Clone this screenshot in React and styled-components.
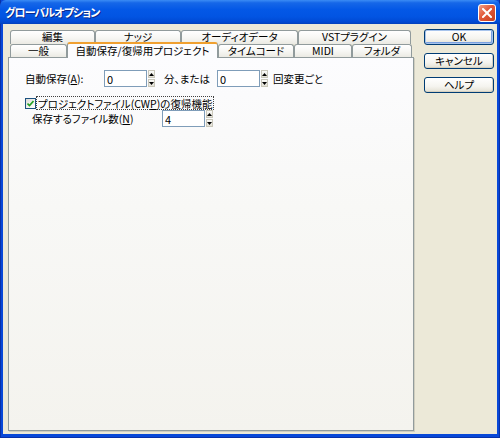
import styled, { createGlobalStyle } from 'styled-components'

const GlobalStyle = createGlobalStyle`
  html, body {
    margin: 0;
    padding: 0;
    background: #ffffff;
  }
  body {
    font-family: "Noto Sans CJK JP", "Noto Sans", sans-serif;
    font-size: 11px;
    font-feature-settings: "palt";
    color: #000000;
  }
`

// 上段タブ
const backTabs = [
  { label: '編集', width: 85 },
  { label: 'ナッジ', width: 86 },
  { label: 'オーディオデータ', width: 117 },
  { label: 'VSTプラグイン', width: 113 },
]

// 下段タブ（2番目が選択中）
const frontTabs = [
  { label: '一般', width: 57 },
  { label: '自動保存/復帰用プロジェクト', width: 151, active: true },
  { label: 'タイムコード', width: 76 },
  { label: 'MIDI', width: 58 },
  { label: 'フォルダ', width: 60 },
]

const Spin = () => (
  <Spinner>
    <SpinButton>
      <svg width="5" height="3" viewBox="0 0 5 3">
        <path d="M2.5 0 L5 3 L0 3 Z" fill="#000" />
      </svg>
    </SpinButton>
    <SpinButton>
      <svg width="5" height="3" viewBox="0 0 5 3">
        <path d="M0 0 L5 0 L2.5 3 Z" fill="#000" />
      </svg>
    </SpinButton>
  </Spinner>
)

const App = () => {
  return (
    <>
      <GlobalStyle />
      <Window>
        <TitleBar>
          <Title>グローバルオプション</Title>
          <CloseButton>
            <svg width="10" height="10" viewBox="0 0 10 10">
              <path d="M1 1 L9 9 M9 1 L1 9" stroke="#fff" strokeWidth="2" strokeLinecap="square" />
            </svg>
          </CloseButton>
        </TitleBar>
        <Body>
          <TabControl>
            <TabRow>
              {backTabs.map((t) => (
                <Tab key={t.label} $width={t.width}>{t.label}</Tab>
              ))}
            </TabRow>
            <TabRow $front>
              {frontTabs.map((t) => (
                <Tab key={t.label} $width={t.width} $active={t.active}>{t.label}</Tab>
              ))}
            </TabRow>
            <Panel>
              <Row>
                <Label $width={79}>自動保存(<u>A</u>):</Label>
                <Field>
                  <Input defaultValue="0" />
                  <Spin />
                </Field>
                <Label $width={53} $indent={9}>分、または</Label>
                <Field>
                  <Input defaultValue="0" />
                  <Spin />
                </Field>
                <Label $indent={5}>回変更ごと</Label>
              </Row>
              <CheckRow>
                <CheckBox>
                  <svg width="7" height="7" viewBox="0 0 7 7">
                    <path d="M0.5 3.5 L2.5 5.5 L6.5 1" stroke="#21a121" strokeWidth="1.6" fill="none" />
                  </svg>
                </CheckBox>
                <FocusLabel>プロジェクトファイル(CW<u>P</u>)の復帰機能</FocusLabel>
              </CheckRow>
              <Row $sub>
                <Label $width={130}>保存するファイル数(<u>N</u>)</Label>
                <Field>
                  <Input defaultValue="4" />
                  <Spin />
                </Field>
              </Row>
            </Panel>
          </TabControl>
          <ButtonColumn>
            <Button $default>OK</Button>
            <Button>キャンセル</Button>
            <Button>ヘルプ</Button>
          </ButtonColumn>
        </Body>
      </Window>
    </>
  )
}

const Window = styled.div`
  width: 500px;
  height: 438px;
  box-sizing: border-box;
  display: flex;
  flex-direction: column;
  background: #0848d8;
  border-left: 1px solid #0831a8;
  border-right: 1px solid #0831a8;
  border-bottom: 1px solid #0831a8;
  padding: 0 2px 3px 2px;
`

const TitleBar = styled.div`
  height: 24px;
  margin: 0 -3px;
  padding: 0 4px 0 5px;
  display: flex;
  align-items: center;
  justify-content: space-between;
  background: linear-gradient(
    #3b8cf5 0%,
    #1667e8 12%,
    #0458e6 40%,
    #0254e2 70%,
    #0049d2 92%,
    #0340b8 100%
  );
  border-radius: 6px 6px 0 0;
`

const Title = styled.div`
  color: #ffffff;
  font-weight: 700;
  font-size: 11px;
  letter-spacing: -0.9px;
  text-shadow: 1px 1px 0 #0a2a8a;
`

const CloseButton = styled.div`
  width: 18px;
  height: 18px;
  box-sizing: border-box;
  border: 1px solid #ffffff;
  border-radius: 3px;
  background: linear-gradient(135deg, #f0a089 0%, #e2593a 45%, #c8401e 100%);
  display: flex;
  align-items: center;
  justify-content: center;
  margin-top: 1px;
`

const Body = styled.div`
  flex: 1;
  background: #ece9d8;
  display: flex;
  padding: 6px 0 3px 5px;
`

const TabControl = styled.div`
  width: 407px;
  display: flex;
  flex-direction: column;
`

const TabRow = styled.div`
  display: flex;
  align-items: flex-end;
  height: ${(p) => (p.$front ? '13px' : '14px')};
  padding-left: 2px;
  position: relative;
  z-index: ${(p) => (p.$front ? 2 : 1)};
`

const Tab = styled.div`
  width: ${(p) => p.$width}px;
  height: ${(p) => (p.$active ? '16px' : '100%')};
  margin-bottom: ${(p) => (p.$active ? '-1px' : '0')};
  box-sizing: border-box;
  flex-shrink: 0;
  border: 1px solid #919b9c;
  border-bottom: none;
  border-top: ${(p) => (p.$active ? '2px solid #f0a030' : '1px solid #919b9c')};
  border-radius: 3px 3px 0 0;
  background: ${(p) =>
    p.$active
      ? '#fcfcfe'
      : 'linear-gradient(#ffffff 0%, #f7f7f4 50%, #ebeae3 100%)'};
  display: flex;
  align-items: center;
  justify-content: center;
  font-size: 10.5px;
  line-height: 1;
  white-space: nowrap;
  padding-top: ${(p) => (p.$active ? '1px' : '0')};
`

const Panel = styled.div`
  flex: 1;
  border: 1px solid #919b9c;
  box-shadow: 1px 1px 0 #d0cebf;
  background: linear-gradient(#fcfcfe 0%, #f8f8f6 40%, #f4f3ee 100%);
  padding: 12px 0 0 16px;
  margin-right: 1px;
`

const Row = styled.div`
  display: flex;
  align-items: center;
  height: 17px;
  padding-left: ${(p) => (p.$sub ? '7px' : '0')};
`

const Label = styled.div`
  width: ${(p) => (p.$width ? `${p.$width}px` : 'auto')};
  padding-left: ${(p) => p.$indent || 0}px;
  flex-shrink: 0;
  font-size: 10.5px;
  white-space: nowrap;

  u {
    text-decoration-thickness: 1px;
    text-underline-offset: 1px;
  }
`

const Field = styled.div`
  display: flex;
  align-items: stretch;
  height: 17px;
`

const Input = styled.input`
  width: 43px;
  height: 17px;
  box-sizing: border-box;
  border: 1px solid #7f9db9;
  background: #ffffff;
  padding: 0 2px;
  font-family: "Noto Sans CJK JP", "Noto Sans", sans-serif;
  font-size: 11px;
  color: #000000;
  outline: none;
`

const Spinner = styled.div`
  width: 7px;
  margin-left: 1px;
  display: flex;
  flex-direction: column;
  gap: 1px;
`

const SpinButton = styled.div`
  flex: 1;
  box-sizing: border-box;
  border: 1px solid #c9c7ba;
  background: linear-gradient(#fbfbf9, #e3e1d6);
  display: flex;
  align-items: center;
  justify-content: center;
`

const CheckRow = styled.div`
  display: flex;
  align-items: center;
  margin-top: 9px;
  height: 14px;
`

const CheckBox = styled.div`
  width: 11px;
  height: 11px;
  box-sizing: border-box;
  border: 1px solid #1c5180;
  background: linear-gradient(135deg, #dcdcd7 0%, #f4f4f0 60%, #ffffff 100%);
  display: flex;
  align-items: center;
  justify-content: center;
`

const FocusLabel = styled.div`
  padding: 0 1px;
  height: 14px;
  display: flex;
  align-items: center;
  border: 1px dotted #404040;
  box-sizing: border-box;
  font-size: 10.5px;
  white-space: nowrap;
`

const ButtonColumn = styled.div`
  display: flex;
  flex-direction: column;
  gap: 8px;
  margin-left: 9px;
  margin-top: -1px;
`

const Button = styled.div`
  width: 70px;
  height: 16px;
  box-sizing: border-box;
  border: 1px solid #003c74;
  border-radius: 3px;
  background: linear-gradient(#ffffff 0%, #f5f4ef 60%, #e3e0d3 100%);
  box-shadow: ${(p) =>
    p.$default
      ? 'inset 0 0 0 1px #a8c4ec, inset -1px -1px 0 1px #7aa0e0'
      : 'inset -1px -1px 0 #d6d0c0'};
  display: flex;
  align-items: center;
  justify-content: center;
  font-size: 10.5px;
  line-height: 1;
`

export default App
